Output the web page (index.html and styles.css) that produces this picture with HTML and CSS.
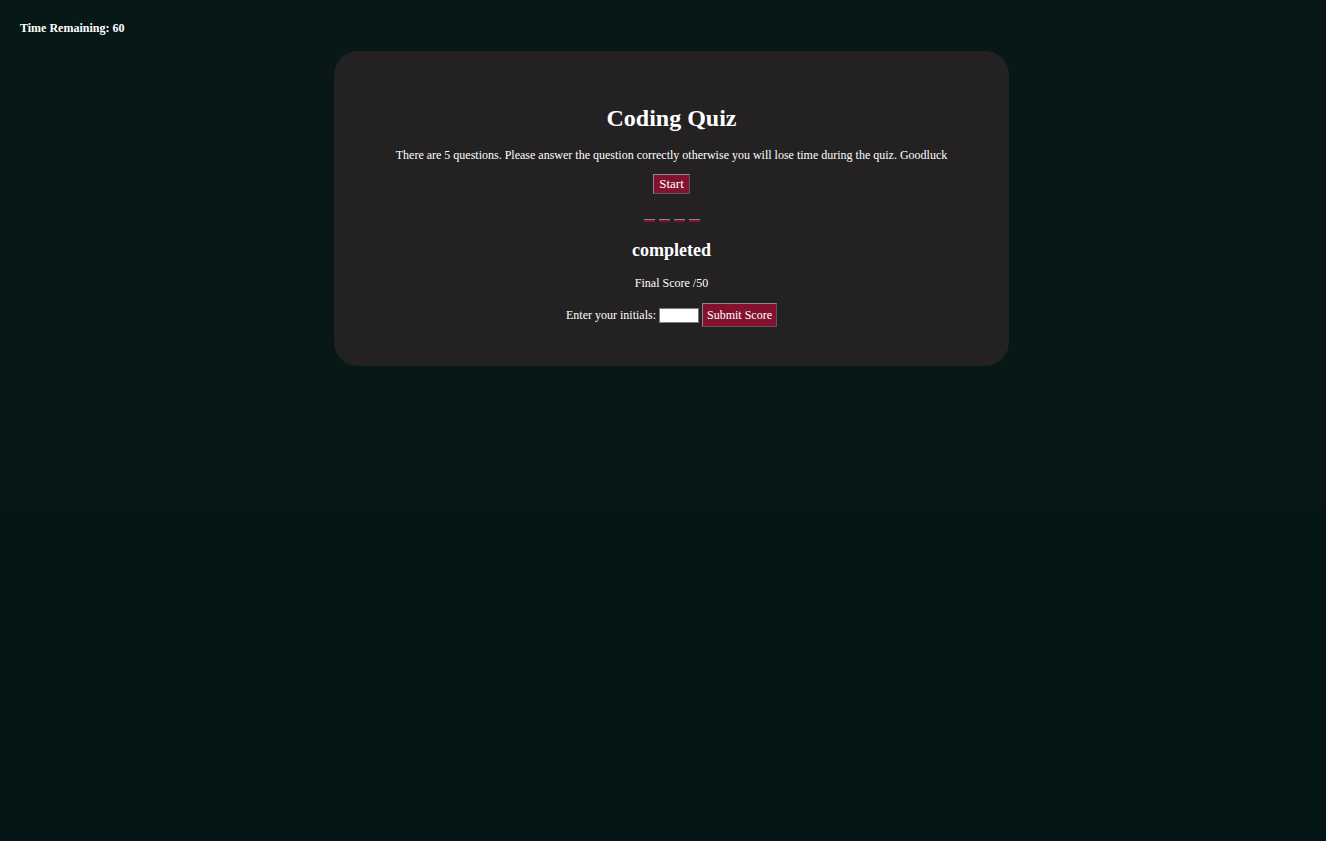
FILE: index.html
```html
<!DOCTYPE html>
<html lang="en">
<head>
<meta charset="utf-8">
<title>Coding Quiz</title>
<link rel="stylesheet" href="styles.css">
</head>
<body>
<div class="page">
  <header class="timer">Time Remaining: <span>60</span></header>
  <main class="card">
    <h1 class="title">Coding Quiz</h1>
    <p class="intro">There are 5 questions. Please answer the question correctly otherwise you will lose time during the quiz. Goodluck</p>
    <button class="btn btn-start">Start</button>
    <div class="choices">
      <button class="btn choice"></button>
      <button class="btn choice"></button>
      <button class="btn choice"></button>
      <button class="btn choice"></button>
    </div>
    <h2 class="done">completed</h2>
    <p class="score">Final Score /50</p>
    <form class="initials">
      <label>Enter your initials: <input type="text" class="initials-input"></label>
      <button type="button" class="btn btn-submit">Submit Score</button>
    </form>
  </main>
</div>
</body>
</html>
```

FILE: styles.css
```css
html {
  background: #041615;
}
body {
  margin: 0;
  font-family: "Liberation Serif", "Times New Roman", serif;
  color: #ffffff;
}
.page {
  background: #081817;
  height: 60vh;
  padding: 20px 20px 0 20px;
  box-sizing: border-box;
}
.timer {
  font-size: 12px;
  font-weight: bold;
  line-height: 16px;
}
.card {
  width: 675px;
  box-sizing: border-box;
  margin: 15px 0 0 314px;
  background: #232122;
  border-radius: 24px;
  padding: 53px 20px 39px;
  text-align: center;
}
.title {
  margin: 0;
  font-size: 24px;
  line-height: 28px;
}
.intro {
  margin: 16px 0 0;
  font-size: 12px;
  line-height: 14px;
}
.btn {
  font-family: "Liberation Serif", "Times New Roman", serif;
  background: #83122f;
  color: #ffffff;
  border: 1px solid;
  border-color: #8a8a8a #5a5a5a #5a5a5a #8a8a8a;
  cursor: pointer;
}
.btn-start {
  margin-top: 12px;
  font-size: 13px;
  padding: 1px 5px;
  height: 20px;
  line-height: 16px;
  vertical-align: top;
}
.choices {
  margin-top: 25px;
  display: flex;
  justify-content: center;
  gap: 4px;
  height: 4px;
}
.choice {
  width: 11px;
  height: 3px;
  padding: 0;
  border-width: 1px 0 0 0;
}
.done {
  margin: 16px 0 0;
  font-size: 18px;
  line-height: 22px;
}
.score {
  margin: 15px 0 0;
  font-size: 12px;
  line-height: 14px;
}
.initials {
  margin-top: 13px;
  font-size: 12px;
  display: flex;
  justify-content: center;
  align-items: center;
  gap: 3px;
}
.initials label {
  display: flex;
  align-items: center;
  gap: 3px;
}
.initials-input {
  width: 36px;
  height: 11px;
  padding: 1px;
  border: 1px solid #7a7a7a;
  background: #ffffff;
  font-size: 11px;
}
.btn-submit {
  font-size: 12px;
  height: 24px;
  padding: 0 4px;
}
```
